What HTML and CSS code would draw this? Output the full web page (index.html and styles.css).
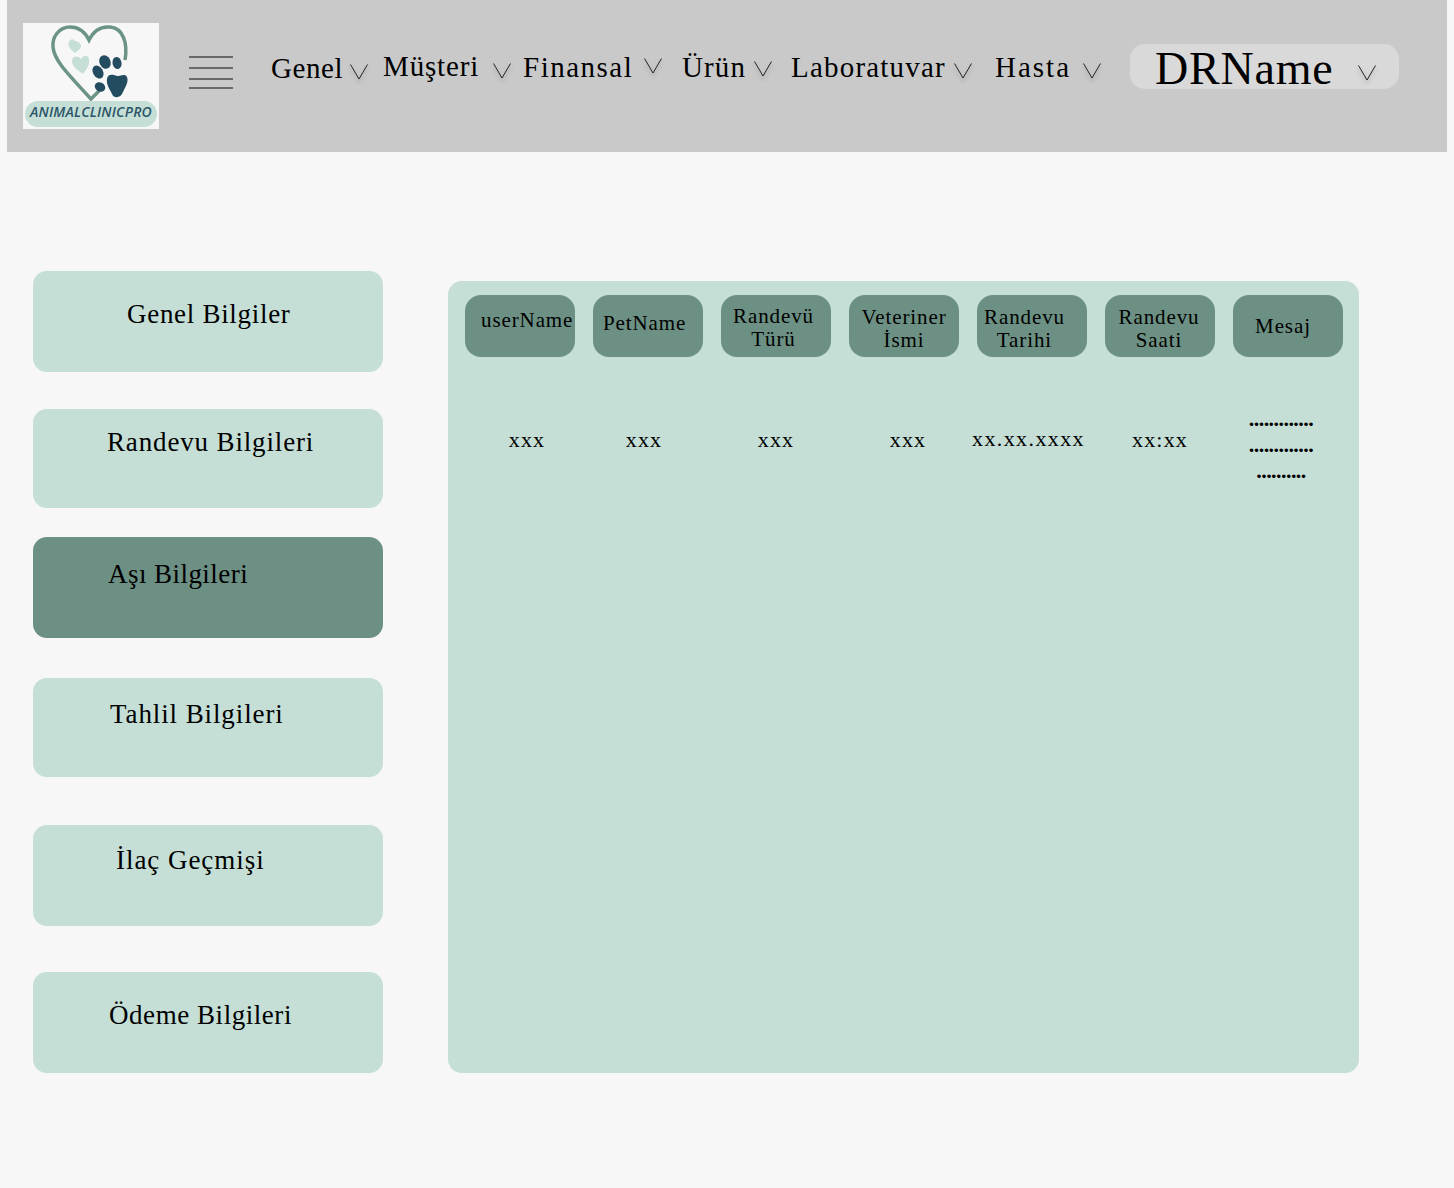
FILE: index.html
```html
<!DOCTYPE html>
<html lang="tr">
<head>
    <meta charset="UTF-8">
    <meta name="viewport" content="width=device-width, initial-scale=1.0">
    <title>AnimalClinicPro</title>
    <link rel="stylesheet" href="styles.css">
</head>
<body>
    <header class="topbar">
        <div class="logo">
            <svg viewBox="0 0 136 106" width="136" height="106">
                <path class="logo-heart" d="M102 37 C105 20 100 5 87 4 C77 3 70 9 66 17 C62 9 55 4 47 4 C36 4 29 14 30 24 C31 36 40 46 68 76 L76 68"/>
                <path class="logo-small-heart" d="M52 30 C48 27 44 23 46 19 C47 16 50 15 52 18 C54 18 58 20 58 23 C58 26 54 28 52 30Z"/>
                <path class="logo-small-heart" d="M60 51 C56 48 49 44 49 38 C49 33 55 32 58 36 C60 32 66 31 66 37 C67 42 63 47 60 51Z"/>
                <ellipse class="logo-paw" cx="82" cy="39" rx="5.500" ry="7" transform="rotate(-25 82 39)"/>
                <ellipse class="logo-paw" cx="94" cy="40" rx="4.500" ry="6" transform="rotate(-10 94 40)"/>
                <ellipse class="logo-paw" cx="75" cy="49" rx="5" ry="7" transform="rotate(-30 75 49)"/>
                <ellipse class="logo-paw" cx="77" cy="64" rx="5.500" ry="4.500" transform="rotate(30 77 64)"/>
                <path class="logo-paw" d="M84 56 C85 50 91 52 94 53 C98 53 102 50 104 54 C106 59 102 64 100 69 C98 75 91 76 89 71 C87 66 83 62 84 56Z"/>
                <rect class="logo-pill" x="2" y="78" width="132" height="26" rx="13"/>
                <text class="logo-text" x="68" y="94" text-anchor="middle">ANIMALCLINICPRO</text>
            </svg>
        </div>
        <div class="burger">
            <span></span>
            <span></span>
            <span></span>
            <span></span>
        </div>
        <nav class="menu">
            <a class="menu-item item-genel">Genel <svg class="chev" viewBox="0 0 18 16"><polyline points="0.500,0.500 9,15 17.500,0.500"/></svg></a>
            <a class="menu-item item-musteri">Müşteri <svg class="chev" viewBox="0 0 18 16"><polyline points="0.500,0.500 9,15 17.500,0.500"/></svg></a>
            <a class="menu-item item-finansal">Finansal <svg class="chev" viewBox="0 0 18 16"><polyline points="0.500,0.500 9,15 17.500,0.500"/></svg></a>
            <a class="menu-item item-urun">Ürün <svg class="chev" viewBox="0 0 18 16"><polyline points="0.500,0.500 9,15 17.500,0.500"/></svg></a>
            <a class="menu-item item-lab">Laboratuvar <svg class="chev" viewBox="0 0 18 16"><polyline points="0.500,0.500 9,15 17.500,0.500"/></svg></a>
            <a class="menu-item item-hasta">Hasta <svg class="chev" viewBox="0 0 18 16"><polyline points="0.500,0.500 9,15 17.500,0.500"/></svg></a>
        </nav>
        <div class="user">
            <span class="user-name">DRName</span>
            <svg class="chev" viewBox="0 0 18 16"><polyline points="0.500,0.500 9,15 17.500,0.500"/></svg>
        </div>
    </header>

    <main class="content">
        <aside class="side">
            <a class="side-item side-genel">Genel Bilgiler</a>
            <a class="side-item side-randevu">Randevu Bilgileri</a>
            <a class="side-item side-asi active">Aşı Bilgileri</a>
            <a class="side-item side-tahlil">Tahlil Bilgileri</a>
            <a class="side-item side-ilac">İlaç Geçmişi</a>
            <a class="side-item side-odeme">Ödeme Bilgileri</a>
        </aside>

        <section class="panel">
            <div class="table-head">
                <div class="head-cell head-user">userName</div>
                <div class="head-cell head-pet">PetName</div>
                <div class="head-cell head-tur">Randevü<br>Türü</div>
                <div class="head-cell head-vet">Veteriner<br>İsmi</div>
                <div class="head-cell head-tarih">Randevu<br>Tarihi</div>
                <div class="head-cell head-saat">Randevu<br>Saati</div>
                <div class="head-cell head-mesaj">Mesaj</div>
            </div>
            <div class="table-row">
                <div class="val val-1">xxx</div>
                <div class="val val-2">xxx</div>
                <div class="val">xxx</div>
                <div class="val val-4">xxx</div>
                <div class="val val-5">xx.xx.xxxx</div>
                <div class="val">xx:xx</div>
                <div class="val val-msg">.............<br>.............<br>..........</div>
            </div>
        </section>
    </main>
</body>
</html>
```

FILE: styles.css
```css
* {
    box-sizing: border-box;
}

body {
    margin: 0;
    width: 1454px;
    height: 1188px;
    overflow: hidden;
    background-color: #f7f7f7;
    color: #000;
    font-family: "Liberation Serif", serif;
}

/* top bar */
.topbar {
    display: flex;
    align-items: flex-start;
    width: 1440px;
    height: 152px;
    margin-left: 7px;
    padding: 23px 0 0 16px;
    background-color: #c9c9c9;
}

.logo {
    width: 136px;
    height: 106px;
    background-color: #f7f7f7;
    flex-shrink: 0;
}

.logo svg {
    display: block;
}

.logo-heart {
    fill: none;
    stroke: #6c9485;
    stroke-width: 3.500;
}

.logo-small-heart,
.logo-pill {
    fill: #c5dfd6;
}

.logo-paw {
    fill: #234c61;
}

.logo-text {
    fill: #2c5568;
    font-family: "Open Sans", sans-serif;
    font-size: 14px;
    font-style: italic;
    font-weight: 600;
    letter-spacing: 0.2px;
}

.burger {
    width: 44px;
    margin: 33px 0 0 30px;
    flex-shrink: 0;
}

.burger span {
    display: block;
    height: 2px;
    margin-bottom: 9px;
    background-color: #6a6a6a;
}

.burger span:nth-child(3) {
    margin-bottom: 7px;
}

.menu {
    display: grid;
    grid-template-columns: 112px 140px 159px 109px 204px 135px;
    margin-left: 38px;
    flex-shrink: 0;
}

.menu-item {
    display: flex;
    font-size: 29px;
    line-height: 34px;
    letter-spacing: 1.1px;
    white-space: pre;
}

.item-genel { padding-top: 28px; letter-spacing: 0.6px; }
.item-musteri { padding-top: 26px; letter-spacing: 0.85px; }
.item-finansal { padding-top: 27px; letter-spacing: 1.5px; }
.item-urun { padding-top: 27px; }
.item-lab { padding-top: 27px; letter-spacing: 1.2px; }
.item-hasta { padding-top: 27px; letter-spacing: 2px; }

.chev {
    display: block;
    width: 18px;
    height: 16px;
    flex-shrink: 0;
    filter: drop-shadow(0 3px 2px rgba(0, 0, 0, 0.25));
}

.chev polyline {
    fill: none;
    stroke: #222;
    stroke-width: 1;
}

.item-genel .chev { margin: 13px 0 0 -1.5px; }
.item-musteri .chev { margin: 14px 0 0 6px; }
.item-finansal .chev { margin: 8px 0 0 1.5px; }
.item-urun .chev { margin: 11px 0 0 -0.5px; }
.item-lab .chev { margin: 13px 0 0 -0.5px; }
.item-hasta .chev { margin: 13px 0 0 2.5px; }

.user {
    display: flex;
    align-items: flex-start;
    width: 269px;
    height: 45px;
    margin: 21px 0 0 0;
    padding-left: 25px;
    border-radius: 15px;
    background-color: #d9d9d9;
}

.user-name {
    font-size: 46px;
    line-height: 50px;
    letter-spacing: 0.8px;
    white-space: nowrap;
}

.user .chev {
    margin: 21px 0 0 24.5px;
}

/* page content */
.content {
    display: flex;
    align-items: flex-start;
    padding: 119px 0 0 33px;
}

.side {
    display: flex;
    flex-direction: column;
    width: 350px;
    flex-shrink: 0;
}

.side-item {
    display: block;
    height: 101px;
    border-radius: 14px;
    background-color: #c5dfd6;
    font-size: 27px;
    line-height: 30px;
    letter-spacing: 0.7px;
    white-space: nowrap;
}

.side-item.active {
    background-color: #6c9083;
}

.side-genel { padding: 28px 0 0 94px; }
.side-randevu { height: 99px; margin-top: 37px; padding: 18px 0 0 74px; letter-spacing: 0.85px; }
.side-asi { margin-top: 29px; padding: 22px 0 0 75px; letter-spacing: 0.45px; }
.side-tahlil { height: 99px; margin-top: 40px; padding: 21px 0 0 77px; letter-spacing: 0.9px; }
.side-ilac { margin-top: 48px; padding: 20px 0 0 83px; letter-spacing: 0.95px; }
.side-odeme { margin-top: 46px; padding: 28px 0 0 76px; letter-spacing: 0.55px; }

.panel {
    width: 911px;
    height: 792px;
    margin: 10px 0 0 65px;
    padding: 14px 0 0 17px;
    border-radius: 14px;
    background-color: #c5dfd6;
    flex-shrink: 0;
}

.table-head,
.table-row {
    display: grid;
    grid-template-columns: repeat(7, 110px);
    column-gap: 18px;
}

.head-cell {
    display: flex;
    align-items: center;
    justify-content: center;
    height: 62px;
    border-radius: 16px;
    background-color: #6c9083;
    font-size: 21px;
    line-height: 23px;
    letter-spacing: 0.9px;
    text-align: center;
    white-space: nowrap;
}

.head-user {
    align-items: flex-start;
    justify-content: flex-start;
    padding: 14px 0 0 16px;
}

.head-pet {
    align-items: flex-start;
    justify-content: flex-start;
    padding: 17px 0 0 10px;
}

.head-tur { padding: 4px 5px 0 0; }
.head-vet { padding-top: 5px; }
.head-tarih { padding: 5px 15px 0 0; }
.head-saat { padding: 5px 2px 0 0; }
.head-mesaj { padding-right: 10px; }

.table-row {
    margin-top: 70px;
}

.val {
    font-size: 22px;
    line-height: 26px;
    letter-spacing: 1.2px;
    text-align: center;
    white-space: nowrap;
}

.val-1 { padding-left: 14px; }
.val-2 { padding-right: 8px; }
.val-4 { padding-left: 8px; }

.val-5 {
    margin: -1px 0 0 -5px;
    letter-spacing: 1.4px;
    text-align: left;
}

.val-msg {
    margin-top: -21px;
    padding-right: 14px;
    letter-spacing: -0.55px;
    font-weight: bold;
}
```
